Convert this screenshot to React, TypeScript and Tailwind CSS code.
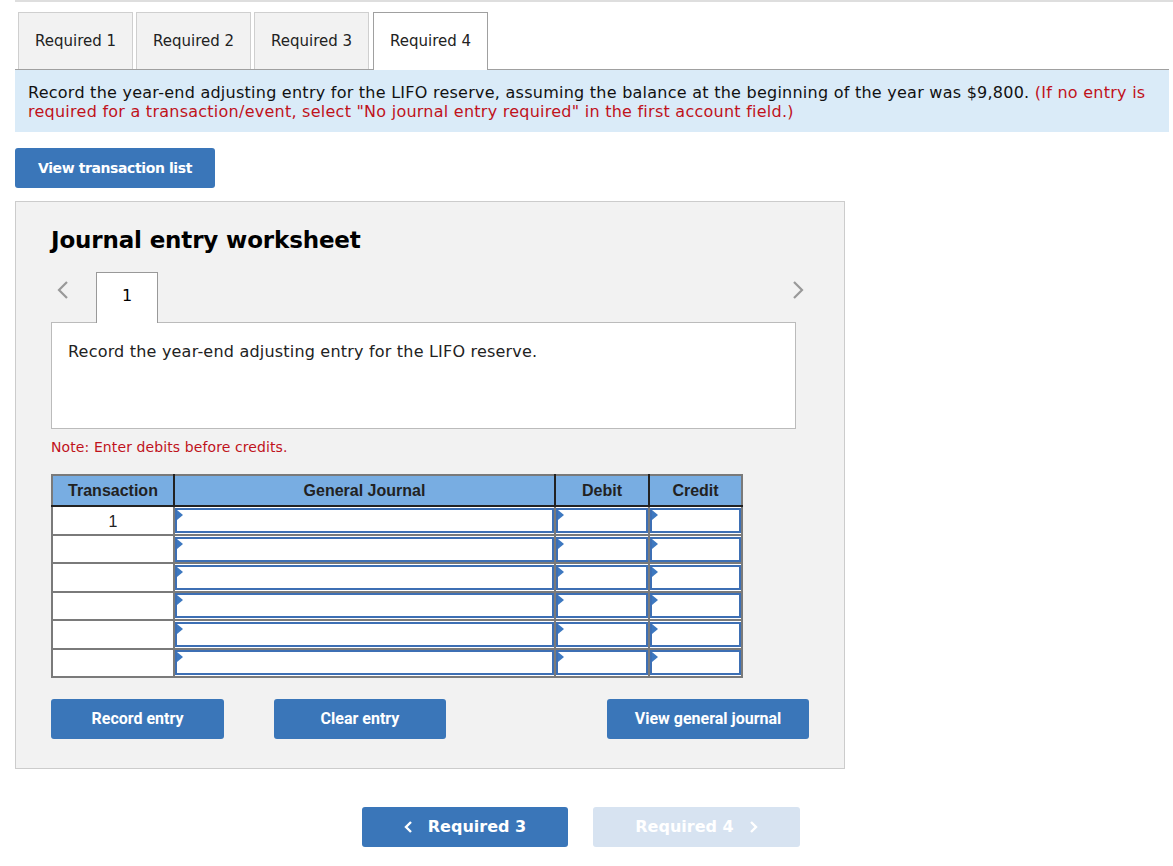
import React from "react";

const V = { fontFamily: '"DejaVu Sans", Verdana, sans-serif' };
const A = { fontFamily: '"Liberation Sans", Arial, sans-serif' };
const N = { fontFamily: '"Liberation Sans Narrow", "Roboto", "Liberation Sans", sans-serif' };

function Tri() {
  return (
    <svg className="absolute left-0 top-0" width="6" height="10" viewBox="0 0 6 10">
      <polygon points="0,0 6,5 0,10" fill="#3d78c0" />
    </svg>
  );
}

function InputCell({ w }: { w: string }) {
  return (
    <td className={`${w} p-0 border-2 border-[#7a7a7a] bg-white`}>
      <div className="relative h-[25px] border-2 border-[#3d6fb4]">
        <Tri />
      </div>
    </td>
  );
}

export default function App() {
  const rows = [0, 1, 2, 3, 4, 5];
  return (
    <div className="w-[1173px] h-[866px] bg-white text-black" style={V}>
      <div className="ml-[15px] h-[2px] bg-[#dedede]" />
      <div className="pl-[18px] pt-[9px] flex gap-[3px] items-end">
        {["Required 1", "Required 2", "Required 3"].map((t) => (
          <div
            key={t}
            className="w-[115px] h-[57px] border border-b-0 border-[#cfcfcf] bg-[#f2f2f2] flex items-center justify-center text-[15px] text-[#222]"
          >
            {t}
          </div>
        ))}
        <div className="ml-[1px] w-[115px] h-[58px] border border-b-0 border-[#a0a0a0] bg-white flex items-center justify-center text-[15px] text-[#222] relative top-[1px]">
          Required 4
        </div>
      </div>
      <div className="ml-[15px] w-[1154px] border-t border-[#a0a0a0] bg-[#daebf8] px-[13px] pt-[13px] pb-[11px] text-[16px] leading-[19px] text-[#111] tracking-[0.25px]">
        Record the year-end adjusting entry for the LIFO reserve, assuming the balance at the beginning of the year was $9,800.{" "}
        <span className="text-[#c0121b]">
          (If no entry is required for a transaction/event, select "No journal entry required" in the first account field.)
        </span>
      </div>
      <div className="ml-[15px] mt-[16px]">
        <button className="w-[200px] h-[40px] rounded-[3px] bg-[#3a76b9] text-white font-bold text-[14px] tracking-[-0.4px]">
          View transaction list
        </button>
      </div>
      <div className="ml-[15px] mt-[13px] w-[830px] h-[568px] border border-[#cccccc] bg-[#f2f2f2] pl-[35px] pr-[20px]">
        <h2 className="mt-[24px] text-[23px] font-bold leading-[28px] tracking-[-0.15px]">Journal entry worksheet</h2>
        <div className="mt-[17px] flex items-end relative w-[745px]">
          <div className="w-[45px] h-[50px] flex items-center">
            <svg width="14" height="22" viewBox="0 0 14 22" className="ml-[5px] mt-[-14px]">
              <polyline points="11,3 3,11 11,19" fill="none" stroke="#999" strokeWidth="2.2" />
            </svg>
          </div>
          <div className="w-[62px] h-[51px] border border-b-0 border-[#999] bg-white flex items-start justify-center pt-[11px] text-[16px] relative top-[1px] z-10">
            1
          </div>
          <div className="flex-1" />
          <svg width="14" height="22" viewBox="0 0 14 22" className="absolute right-[-9px] top-[8px]">
            <polyline points="3,3 11,11 3,19" fill="none" stroke="#999" strokeWidth="2.2" />
          </svg>
        </div>
        <div className="w-[745px] h-[107px] border border-[#bbbbbb] bg-white px-[16px] pt-[17px] text-[16px] text-[#222] tracking-[0.2px]">
          Record the year-end adjusting entry for the LIFO reserve.
        </div>
        <div className="mt-[9px] text-[14px] text-[#c0121b] leading-[18px] tracking-[0.1px]">Note: Enter debits before credits.</div>
        <table className="mt-[18px] border-collapse border-2 border-[#7a7a7a]" style={A}>
          <thead>
            <tr className="bg-[#78ade2] text-[#222] font-bold text-[16px] h-[31px]">
              <th className="w-[122px] border-b-2 border-r-2 border-[#222] font-bold">Transaction</th>
              <th className="w-[381px] border-b-2 border-r-2 border-[#222] font-bold">General Journal</th>
              <th className="w-[94px] border-b-2 border-r-2 border-[#222] font-bold">Debit</th>
              <th className="w-[93px] border-b-2 border-[#222] font-bold">Credit</th>
            </tr>
          </thead>
          <tbody>
            {rows.map((r) => (
              <tr key={r} className="h-[28.4px]">
                <td className="w-[122px] p-0 border-2 border-[#7a7a7a] bg-white text-center align-top text-[16px] text-[#222] pt-[3px]">
                  {r === 0 ? "1" : ""}
                </td>
                <InputCell w="w-[381px]" />
                <InputCell w="w-[94px]" />
                <InputCell w="w-[93px]" />
              </tr>
            ))}
          </tbody>
        </table>
        <div className="mt-[21px] flex" style={N}>
          <button className="shrink-0 w-[173px] h-[40px] rounded-[3px] bg-[#3a76b9] text-white text-[16px] font-bold">
            Record entry
          </button>
          <button className="shrink-0 ml-[50px] w-[172px] h-[40px] rounded-[3px] bg-[#3a76b9] text-white text-[16px] font-bold">
            Clear entry
          </button>
          <button className="shrink-0 ml-[161px] w-[202px] h-[40px] rounded-[3px] bg-[#3a76b9] text-white text-[16px] font-bold">
            View general journal
          </button>
        </div>
      </div>
      <div className="mt-[38px] flex pl-[362px] gap-[25px]">
        <button className="w-[206px] h-[40px] rounded-[3px] bg-[#3a76b9] text-white font-bold text-[16px] flex items-center justify-center gap-[14px]">
          <svg width="10" height="14" viewBox="0 0 10 14">
            <polyline points="7,2 2,7 7,12" fill="none" stroke="white" strokeWidth="2.4" />
          </svg>
          Required 3
        </button>
        <button className="w-[207px] h-[40px] rounded-[3px] bg-[#d7e3f1] text-white font-bold text-[16px] flex items-center justify-center gap-[14px]">
          Required 4
          <svg width="10" height="14" viewBox="0 0 10 14">
            <polyline points="3,2 8,7 3,12" fill="none" stroke="white" strokeWidth="2.4" />
          </svg>
        </button>
      </div>
    </div>
  );
}
